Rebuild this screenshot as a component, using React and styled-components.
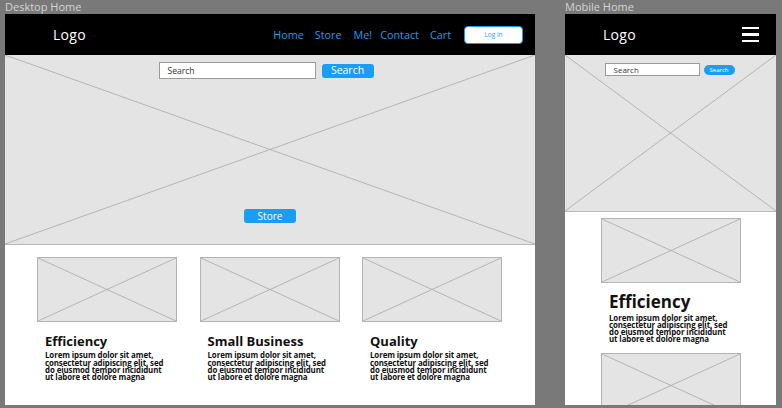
import React from "react";
import styled, { createGlobalStyle } from "styled-components";

const GlobalStyle = createGlobalStyle`
  html, body {
    margin: 0;
    padding: 0;
    background: #797979;
    font-family: "Open Sans", "Liberation Sans", sans-serif;
  }
`;

const Canvas = styled.div`
  width: 782px;
  height: 408px;
  overflow: hidden;
  display: flex;
  align-items: flex-start;
  gap: 30px;
  padding-left: 5px;
  box-sizing: border-box;
  background: #797979;
`;

const Artboard = styled.div`
  display: flex;
  flex-direction: column;
  width: ${({ $w }) => $w}px;
`;

const Label = styled.div`
  height: 14px;
  line-height: 14px;
  font-size: 11px;
  color: #d4d4d4;
  white-space: nowrap;
`;

const Frame = styled.div`
  height: 391px;
  background: #fff;
  overflow: hidden;
  display: flex;
  flex-direction: column;
`;

const TopBar = styled.header`
  height: 41px;
  flex: none;
  background: #000;
  display: flex;
  align-items: center;
  padding: 0 ${({ $right }) => $right}px 0 ${({ $left }) => $left}px;
  box-sizing: border-box;
`;

const Logo = styled.div`
  color: #fff;
  font-size: 14px;
  letter-spacing: 0.3px;
`;

const Nav = styled.nav`
  margin-left: auto;
  display: flex;
  align-items: center;
  gap: 11px;
`;

const NavLink = styled.a`
  color: #1c9cf0;
  font-size: 10.8px;
  margin-left: ${({ $shift }) => $shift || 0}px;
`;

const LoginButton = styled.button`
  margin-left: 13px;
  width: 59px;
  height: 18px;
  border: 1px solid #1c9cf0;
  border-radius: 4px;
  background: #fff;
  color: #1c9cf0;
  font-family: inherit;
  font-size: 6.5px;
  padding: 0;
`;

const Burger = styled.div`
  margin-left: auto;
  display: flex;
  flex-direction: column;
  gap: 4px;
  span {
    display: block;
    width: 17px;
    height: 2.2px;
    background: #fff;
  }
`;

const Hero = styled.section`
  position: relative;
  height: ${({ $h }) => $h}px;
  flex: none;
  background: #e4e4e4;
  border-bottom: 1px solid #b9b9b9;
  box-sizing: border-box;
  display: flex;
  flex-direction: column;
  align-items: center;
  padding-top: ${({ $top }) => $top}px;
`;

const Cross = styled.svg`
  position: absolute;
  inset: 0;
  width: 100%;
  height: 100%;
`;

const SearchRow = styled.div`
  position: relative;
  display: flex;
  align-items: center;
  gap: ${({ $gap }) => $gap}px;
  margin-left: ${({ $shift }) => $shift}px;
`;

const SearchInput = styled.div`
  width: ${({ $w }) => $w}px;
  height: ${({ $h }) => $h}px;
  background: #fff;
  border: 1px solid #9a9a9a;
  box-sizing: border-box;
  font-size: ${({ $fs }) => $fs}px;
  color: #333;
  padding-left: 8px;
  display: flex;
  align-items: ${({ $end }) => ($end ? "flex-end" : "center")};
`;

const BlueButton = styled.button`
  position: relative;
  width: ${({ $w }) => $w}px;
  height: ${({ $h }) => $h}px;
  background: #1a9ef5;
  border: none;
  border-radius: ${({ $r }) => $r}px;
  color: #fff;
  font-family: inherit;
  font-size: ${({ $fs }) => $fs}px;
  padding: 0;
  line-height: 1;
`;

const Spacer = styled.div`
  flex: 1;
`;

const StoreButton = styled(BlueButton)`
  margin-bottom: 21px;
`;

const Cards = styled.section`
  display: grid;
  grid-template-columns: repeat(${({ $cols }) => $cols}, 140px);
  column-gap: 22.5px;
  row-gap: 9px;
  padding: ${({ $pad }) => $pad};
`;

const Card = styled.div`
  display: flex;
  flex-direction: column;
`;

const Thumb = styled.div`
  position: relative;
  height: 65px;
  background: #e4e4e4;
  border: 1px solid #b4b4b4;
  box-sizing: border-box;
`;

const CardTitle = styled.h3`
  margin: ${({ $big }) => ($big ? "10px 0 3px 8px" : "12px 0 4px 8px")};
  font-size: ${({ $big }) => ($big ? 17 : 13)}px;
  font-weight: 700;
  color: #111;
  line-height: 1.1;
`;

const CardText = styled.p`
  margin: 0 0 0 8px;
  font-size: 7.9px;
  line-height: 7.2px;
  font-weight: 700;
  color: #111;
  letter-spacing: -0.1px;
  width: 121px;
`;

function XLines() {
  return (
    <Cross viewBox="0 0 100 100" preserveAspectRatio="none">
      <line x1="0" y1="0" x2="100" y2="100" stroke="#a8a8a8" strokeWidth="0.8" vectorEffect="non-scaling-stroke" />
      <line x1="100" y1="0" x2="0" y2="100" stroke="#a8a8a8" strokeWidth="0.8" vectorEffect="non-scaling-stroke" />
    </Cross>
  );
}

const lorem = "Lorem ipsum dolor sit amet, consectetur adipiscing elit, sed do eiusmod tempor incididunt ut labore et dolore magna";

function FeatureCard({ title, big }) {
  return (
    <Card>
      <Thumb>
        <XLines />
      </Thumb>
      {title && <CardTitle $big={big}>{title}</CardTitle>}
      {title && <CardText>{lorem}</CardText>}
    </Card>
  );
}

function DesktopHome() {
  return (
    <Artboard $w={530}>
      <Label>Desktop Home</Label>
      <Frame>
        <TopBar $left={48} $right={12}>
          <Logo>Logo</Logo>
          <Nav>
            <NavLink>Home</NavLink>
            <NavLink>Store</NavLink>
            <NavLink $shift={1}>Me!</NavLink>
            <NavLink $shift={-3}>Contact</NavLink>
            <NavLink>Cart</NavLink>
          </Nav>
          <LoginButton>Log in</LoginButton>
        </TopBar>
        <Hero $h={190} $top={7}>
          <XLines />
          <SearchRow $gap={6} $shift={-8}>
            <SearchInput $w={157} $h={17} $fs={8.5}>Search</SearchInput>
            <BlueButton $w={52} $h={14} $r={3} $fs={10.5}>Search</BlueButton>
          </SearchRow>
          <Spacer />
          <StoreButton $w={52} $h={14} $r={3} $fs={10}>Store</StoreButton>
        </Hero>
        <Cards $cols={3} $pad="12px 0 0 32px">
          <FeatureCard title="Efficiency" />
          <FeatureCard title="Small Business" />
          <FeatureCard title="Quality" />
        </Cards>
      </Frame>
    </Artboard>
  );
}

function MobileHome() {
  return (
    <Artboard $w={211}>
      <Label>Mobile Home</Label>
      <Frame>
        <TopBar $left={38} $right={17}>
          <Logo>Logo</Logo>
          <Burger>
            <span />
            <span />
            <span />
          </Burger>
        </TopBar>
        <Hero $h={157} $top={8}>
          <XLines />
          <SearchRow $gap={4} $shift={-2}>
            <SearchInput $w={95} $h={13} $fs={8} $end>Search</SearchInput>
            <BlueButton $w={31} $h={10} $r={5} $fs={6}>Search</BlueButton>
          </SearchRow>
        </Hero>
        <Cards $cols={1} $pad="6px 0 0 36px">
          <FeatureCard title="Efficiency" big />
          <FeatureCard />
        </Cards>
      </Frame>
    </Artboard>
  );
}

export default function App() {
  return (
    <>
      <GlobalStyle />
      <Canvas>
        <DesktopHome />
        <MobileHome />
      </Canvas>
    </>
  );
}
